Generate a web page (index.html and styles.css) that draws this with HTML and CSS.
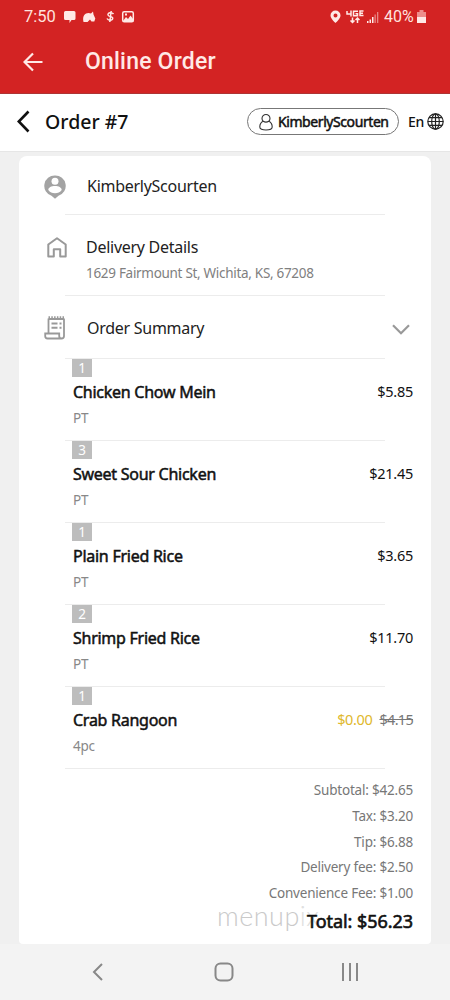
FILE: index.html
```
<!DOCTYPE html>
<html lang="en">
<head>
<meta charset="utf-8">
<title>Online Order</title>
<link rel="stylesheet" href="styles.css">
</head>
<body>
<div class="statusbar">
  <span class="clock">7:50</span>
  <svg class="st-left" width="80" height="14" viewBox="0 0 80 14" fill="#ffe9e6">
    <path d="M2 1h9q1.500 0 1.500 1.500v6q0 1.500-1.500 1.500h-2.500l-2 3v-3h-4q-1.500 0-1.500-1.500v-6q0-1.500 1.500-1.500z"/>
    <path d="M20.500 12c-1.500-6 1.500-9 5-9l2.500.5 2-2 .5 3 1.800 4-1 3h-2.800l-1.500-2-2.500 2.500z"/>
    <path d="M50.500 4c-1.500-2-6-1.500-5.500 1 .3 2 5 1.200 4.700 3.500-.3 2.200-4.500 2.200-5.700 0M48.200 1l-1.400 11" fill="none" stroke="#ffe9e6" stroke-width="1.500"/>
    <rect x="59.700" y="1.800" width="10.600" height="10" rx="1.500" fill="none" stroke="#ffe9e6" stroke-width="1.500"/>
    <path d="M60 11l3-4 2 2 2.500-3.500 3 4v2zM62 3.500h2v2h-2z"/>
  </svg>
  <svg class="st-right" width="50" height="16" viewBox="0 0 50 16" fill="#ffe9e6">
    <path fill-rule="evenodd" d="M5.500 1.500a5 5 0 0 1 5 5c0 3-5 7.500-5 7.500s-5-4.500-5-7.500a5 5 0 0 1 5-5zm0 3a2 2 0 1 0 0 4 2 2 0 0 0 0-4z"/>
    <path d="M17 2v3h4M21 1.500v6M28 2.200h-4.500v4.600h4v-2h-2M33.500 2h-3.500v4.500h3.500M30 4.300h3M22.500 8.500v5M20.500 11.500l2 2 2-2M27.500 14v-5M25.500 11l2-2 2 2" fill="none" stroke="#ffe9e6" stroke-width="1.500"/>
    <path d="M37 12h1.500v2H37zM39.500 10.500h1.500V14h-1.500zM42 8h1.500v6H42z"/><path d="M44.500 5.500h1.300V14h-1.300zM47 3h1.300v11H47z" opacity=".5"/>
  </svg>
  <span class="percent">40%</span>
  <svg class="battery" width="9" height="13" viewBox="0 0 9 13"><path d="M0 2h2.500V0h4v2H9v5H0z" fill="#ed8e8b"/><path d="M0 7h9v6H0z" fill="#ffe9e6"/></svg>
</div>
<div class="appbar">
  <svg class="back" width="20" height="20" viewBox="0 0 20 20"><path d="M19.500 10H2M10 1.500L1.500 10l8.500 8.500" fill="none" stroke="#ffe9e6" stroke-width="2.200"/></svg>
  <span class="apptitle">Online Order</span>
</div>
<header class="header">
  <svg class="chev" width="13" height="23" viewBox="0 0 13 23"><path d="M11.500 1.500L1.800 11.500l9.700 10" fill="none" stroke="#111" stroke-width="2.600"/></svg>
  <span class="ordertitle">Order #7</span>
  <div class="pill">
    <svg width="14" height="18" viewBox="0 0 14 18"><path d="M4.200 8.300a4 4 0 1 1 5.600 0c2.200 1 3.400 3 3.400 5.700 0 2.200-2.500 3-6.200 3s-6.200-.8-6.200-3c0-2.700 1.200-4.700 3.400-5.700zM4.200 8.300q2.800 1.600 5.600 0" fill="none" stroke="#333" stroke-width="1.100"/></svg>
    <span class="username">KimberlyScourten</span>
  </div>
  <span class="lang">En</span>
  <svg class="globe" width="17" height="17" viewBox="0 0 17 17" fill="none" stroke="#222" stroke-width="1.200"><circle cx="8.500" cy="8.500" r="7.700"/><ellipse cx="8.500" cy="8.500" rx="3.800" ry="7.700"/><path d="M8.500.8v15.400M.8 8.500h15.400M2 4.700h13M2 12.300h13"/></svg>
</header>
<main class="page">
  <section class="card">
    <div class="info user">
      <svg width="22" height="24" viewBox="0 0 22 24"><path d="M11 .5a10.400 10.400 0 0 1 3.500 20.300L11 23.800l-3.500-3A10.400 10.400 0 0 1 11 .5z" fill="#a3a3a3"/><circle cx="11" cy="6.300" r="3.500" fill="#fff"/><path d="M4.300 15c0-2.500 3-4 6.700-4s6.700 1.500 6.700 4c-1.500 2.200-4 3.300-6.700 3.300s-5.200-1.100-6.700-3.300z" fill="#fff"/></svg>
      <span class="label l-user">KimberlyScourten</span>
    </div>
    <div class="info delivery">
      <svg width="20" height="21" viewBox="0 0 20 21"><path d="M1.300 19.500V7.500L10 1.200l8.700 6.300v12h-5.500v-7.300H6.800v7.300z" fill="none" stroke="#999" stroke-width="2" stroke-linejoin="round"/></svg>
      <div class="stack"><span class="label l-delivery">Delivery Details</span><span class="address">1629 Fairmount St, Wichita, KS, 67208</span></div>
    </div>
    <div class="info summary">
      <svg width="22" height="24" viewBox="0 0 22 24"><path d="M4.500 17V2.500M20 2.500V20q0 2.500-2.500 2.500h-14Q1.200 22.500 1.200 20v-2.500h14V20q0 2.500 2.400 2.500M4.500 3H20" fill="none" stroke="#999" stroke-width="1.800"/><path d="M4.500 1.300H21" stroke="#999" stroke-width="2.200" stroke-dasharray="1.500 1.300"/><path d="M7.500 7.500h6M7.500 11.800h6M15.500 7.500h2M15.500 11.800h2" stroke="#999" stroke-width="1.900"/></svg>
      <span class="label l-summary">Order Summary</span>
      <svg class="down" width="18" height="11" viewBox="0 0 18 11"><path d="M1 1.200l8 8 8-8" fill="none" stroke="#999" stroke-width="2.200"/></svg>
    </div>
    <div class="item"><span class="qty">1</span><div class="line"><span class="name">Chicken Chow Mein</span><span class="price">$5.85</span></div><span class="opt">PT</span></div>
    <div class="item"><span class="qty">3</span><div class="line"><span class="name">Sweet Sour Chicken</span><span class="price">$21.45</span></div><span class="opt">PT</span></div>
    <div class="item"><span class="qty">1</span><div class="line"><span class="name">Plain Fried Rice</span><span class="price">$3.65</span></div><span class="opt">PT</span></div>
    <div class="item"><span class="qty">2</span><div class="line"><span class="name">Shrimp Fried Rice</span><span class="price">$11.70</span></div><span class="opt">PT</span></div>
    <div class="item"><span class="qty">1</span><div class="line"><span class="name">Crab Rangoon</span><span class="price sale"><span class="free">$0.00</span><s class="was">$4.15</s></span></div><span class="opt">4pc</span></div>
    <div class="totals">
      <span>Subtotal: $42.65</span>
      <span>Tax: $3.20</span>
      <span>Tip: $6.88</span>
      <span>Delivery fee: $2.50</span>
      <span>Convenience Fee: $1.00</span>
      <div class="grand"><span class="mark">menup<span class="fade">ix</span></span><span class="total">Total: $56.23</span></div>
    </div>
  </section>
</main>
<nav class="navbar">
  <svg width="12" height="18" viewBox="0 0 12 18"><path d="M10 1L2 9l8 8" fill="none" stroke="#888" stroke-width="2"/></svg>
  <svg class="home" width="20" height="20" viewBox="0 0 20 20"><rect x="1.500" y="1.500" width="17" height="17" rx="5" fill="none" stroke="#888" stroke-width="2"/></svg>
  <svg width="18" height="18" viewBox="0 0 18 18"><path d="M2 0v18M9 0v18M16 0v18" stroke="#888" stroke-width="2"/></svg>
</nav>
</body>
</html>
```
FILE: styles.css
```
* { box-sizing: border-box; }
body { margin: 0; width: 450px; height: 1000px; overflow: hidden; background: #f0f0f0; font-family: "Noto Sans", sans-serif; color: #222; white-space: nowrap; }
svg { display: block; flex: none; }
.statusbar { height: 32px; background: #d32323; color: #ffe2df; display: flex; align-items: center; padding: 1px 0 0 24px; font: 16px/30px Roboto, sans-serif; }
.clock { width: 39px; font-size: 16.500px; }
.st-right { margin-left: 187px; }
.percent { margin-left: 4px; width: 33px; font-size: 16px; }
.appbar { height: 62px; background: #d32323; border-bottom: 1px solid #ad3434; display: flex; align-items: center; padding: 0 0 2px 23px; }
.apptitle { margin-left: 42px; padding-top: 1px; font: 500 23px/30px Roboto, sans-serif; letter-spacing: .2px; color: #ffe9e6; }
.header { height: 58px; background: #fff; border-bottom: 1px solid #e6e6e6; display: flex; align-items: center; padding: 0 6px 2px 17px; color: #111; }
.ordertitle { margin-left: 15px; width: 202px; font-size: 19.500px; font-weight: 500; flex: none; }
.pill { width: 152px; height: 27px; border: 1px solid #777; border-radius: 14px; display: flex; align-items: center; padding-left: 11px; flex: none; }
.username { margin-left: 5px; font-size: 14px; -webkit-text-stroke: .5px #111; letter-spacing: -.42px; }
.lang { margin-left: 9px; width: 19px; font-size: 14px; font-weight: 500; letter-spacing: -.3px; flex: none; }
.page { height: 792px; padding: 4px 19px 0; }
.card { height: 788px; background: #fff; border-radius: 8px 8px 4px 4px; }
.info { display: flex; margin-left: 46px; width: 320px; border-bottom: 1px solid #ececec; }
.info > svg:first-child { margin-left: -21px; }
.label { font-size: 16px; line-height: 22px; letter-spacing: -.27px; }
.user { height: 59px; padding-top: 19px; }
.l-user { margin-left: 21px; }
.delivery { height: 81px; padding-top: 22px; }
.delivery > svg:first-child { margin-left: -18px; }
.stack { margin: -1px 0 0 19px; display: flex; flex-direction: column; }
.address { font-size: 13.500px; line-height: 20px; letter-spacing: -.3px; color: #808080; margin-top: 5px; }
.summary { height: 63px; padding-top: 20px; position: relative; }
.l-summary { margin-left: 21px; line-height: 24px; }
.down { position: absolute; left: 327px; top: 28px; }
.item { height: 82px; margin-left: 46px; width: 320px; padding-left: 8px; border-bottom: 1px solid #ececec; display: flex; flex-direction: column; align-items: flex-start; }
.qty { margin-left: -1px; width: 20px; height: 18px; background: #bdbdbd; color: #fff; font-size: 13.500px; line-height: 18px; text-align: center; }
.line { width: 340px; display: flex; justify-content: space-between; line-height: 24px; margin-top: 3px; }
.name { font-size: 16px; color: #111; -webkit-text-stroke: .5px #111; letter-spacing: -.26px; }
.price { font-size: 14.500px; color: #111; letter-spacing: -.28px; line-height: 23px; }
.sale { letter-spacing: -.7px; }
.free { color: #e0b82c; margin-right: 7px; letter-spacing: -.35px; }
.was { color: #777; }
.opt { font-size: 13.500px; line-height: 20px; letter-spacing: -.2px; color: #888; margin-top: 4px; }
.totals { padding: 9px 18px 0 0; display: flex; flex-direction: column; align-items: flex-end; font-size: 13.500px; line-height: 25.800px; letter-spacing: -.2px; color: #777; }
.grand { position: relative; line-height: 30px; margin-top: -1px; }
.total { position: relative; font-size: 18px; color: #111; -webkit-text-stroke: .6px #111; letter-spacing: -.05px; }
.mark { position: absolute; left: -90px; top: -5px; font: 300 27px/30px Lato, sans-serif; letter-spacing: .5px; color: #cacaca; }
.fade { color: #e0e0e0; }
.navbar { height: 56px; background: #f3f3f3; display: flex; align-items: center; justify-content: space-between; padding: 0 91px 0 92px; }
.home { margin-left: 2px; }
```
